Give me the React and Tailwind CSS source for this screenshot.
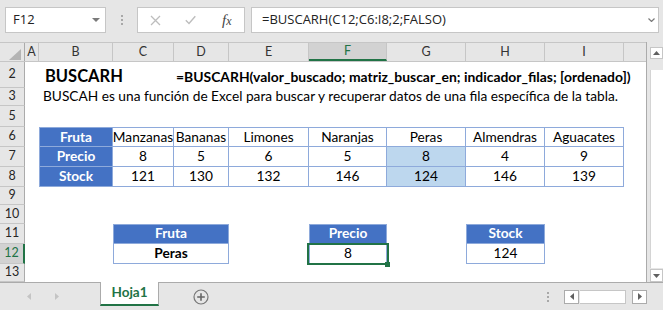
import React from 'react'

const fruits = ['Manzanas', 'Bananas', 'Limones', 'Naranjas', 'Peras', 'Almendras', 'Aguacates']
const precios = ['8', '5', '6', '5', '8', '4', '9']
const stock = ['121', '130', '132', '146', '124', '146', '139']
const widths = ['w-[61px]', 'w-[55px]', 'w-[80px]', 'w-[78px]', 'w-[79px]', 'w-[79px]', 'w-[79px]']

const headers = [
  { label: 'A', w: 'w-[14px]' },
  { label: 'B', w: 'w-[74px]' },
  { label: 'C', w: 'w-[61px]' },
  { label: 'D', w: 'w-[55px]' },
  { label: 'E', w: 'w-[80px]' },
  { label: 'F', w: 'w-[78px]', active: true },
  { label: 'G', w: 'w-[79px]' },
  { label: 'H', w: 'w-[79px]' },
  { label: 'I', w: 'w-[79px]' },
  { label: '', w: 'w-[22px]', last: true },
]

function RowHead({ n, active }) {
  return (
    <div
      className={
        active
          ? 'w-[25px] shrink-0 flex items-center justify-center bg-[#d2d2d2] text-[#217346] border-b border-b-[#c6c6c6] border-r-2 border-r-[#217346] text-[12.5px] leading-none'
          : 'w-[25px] shrink-0 flex items-center justify-center bg-[#e6e6e6] text-[#262626] border-b border-b-[#c6c6c6] border-r border-r-[#ababab] text-[12.5px] leading-none'
      }
    >
      {n}
    </div>
  )
}

function TableRow({ n, label, values, top, hi }) {
  return (
    <div className="flex h-[20px]">
      <RowHead n={n} />
      <div className="w-[14px] shrink-0" />
      <div
        className={`w-[74px] shrink-0 bg-[#4472c4] text-white font-bold flex items-center justify-center border-l border-r border-b border-[#8eaadb] ${top ? 'border-t' : ''}`}
      >
        {label}
      </div>
      {values.map((v, i) => (
        <div
          key={i}
          className={`${widths[i]} shrink-0 flex items-center justify-center border-r border-b border-[#8eaadb] ${top ? 'border-t' : ''} ${hi && i === 4 ? 'bg-[#bdd7ee]' : 'bg-white'}`}
        >
          {v}
        </div>
      ))}
    </div>
  )
}

function EmptyRow({ n }) {
  return (
    <div className="flex h-[20px]">
      <RowHead n={n} />
    </div>
  )
}

function ScrollBtn({ dir }) {
  const paths = {
    up: 'M0 4L3.5 0L7 4Z',
    down: 'M0 0L7 0L3.5 4Z',
    left: 'M4 0L4 7L0 3.5Z',
    right: 'M0 0L4 3.5L0 7Z',
  }
  const vertical = dir === 'up' || dir === 'down'
  return (
    <svg width={vertical ? 7 : 4} height={vertical ? 4 : 7} viewBox={vertical ? '0 0 7 4' : '0 0 4 7'}>
      <path d={paths[dir]} fill="#606060" />
    </svg>
  )
}

export default function App() {
  return (
    <div className="w-[663px] h-[310px] overflow-hidden bg-[#e6e6e6] flex flex-col font-['Lato',sans-serif] text-[13.7px] text-black">
      {/* formula bar */}
      <div className="h-[42px] shrink-0 flex items-start pt-[7px] font-['Open_Sans',sans-serif] text-[13px] text-[#222]">
        <div className="ml-[5px] w-[101px] h-[26px] bg-white border border-[#c6c6c6] flex items-center pl-[7px] pr-[5px]">
          <span className="flex-1">F12</span>
          <svg width="8" height="4" viewBox="0 0 8 4">
            <path d="M0 0H8L4 4Z" fill="#7a7a7a" />
          </svg>
        </div>
        <div className="w-[31px] h-[26px] flex flex-col items-center justify-center gap-[2px]">
          <div className="w-[2px] h-[2px] bg-[#a8a8a8]" />
          <div className="w-[2px] h-[2px] bg-[#a8a8a8]" />
          <div className="w-[2px] h-[2px] bg-[#a8a8a8]" />
        </div>
        <div className="w-[108px] h-[26px] bg-white border border-[#c6c6c6] flex items-center">
          <svg className="ml-[12px]" width="11" height="11" viewBox="0 0 11 11">
            <path d="M1 1L10 10M10 1L1 10" stroke="#bdbdbd" strokeWidth="1.3" />
          </svg>
          <svg className="ml-[24px]" width="11" height="10" viewBox="0 0 11 10">
            <path d="M0.8 5.2L4 8.4L10.3 1.2" stroke="#bdbdbd" strokeWidth="1.4" fill="none" />
          </svg>
          <span className="ml-[26px] font-['Liberation_Serif',serif] italic text-[15px] text-[#444] leading-none">
            f<span className="text-[12px]">x</span>
          </span>
        </div>
        <div className="w-[6px]" />
        <div className="w-[408px] h-[26px] bg-white border border-[#c6c6c6] flex items-center pl-[10px] pr-[3px]">
          <span className="flex-1 whitespace-nowrap">=BUSCARH(C12;C6:I8;2;FALSO)</span>
          <svg width="7" height="4" viewBox="0 0 7 4">
            <path d="M0.5 0.5L3.5 3.5L6.5 0.5" stroke="#7a7a7a" strokeWidth="1.2" fill="none" />
          </svg>
        </div>
      </div>

      {/* sheet + vertical scrollbar */}
      <div className="h-[240px] shrink-0 flex overflow-hidden">
        <div className="w-[647px] shrink-0 border-r border-[#ababab] bg-white flex flex-col overflow-hidden">
          {/* column headers */}
          <div className="flex h-[20px] shrink-0 bg-[#e6e6e6] border-t border-b border-[#c6c6c6] text-[12.5px] text-[#333]">
            <div className="w-[25px] shrink-0 border-r border-[#ababab] flex items-end justify-end pr-[3px] pb-[1px]">
              <svg width="12" height="11" viewBox="0 0 12 11">
                <path d="M12 0V11H0Z" fill="#b4b4b4" />
              </svg>
            </div>
            {headers.map((h) => (
              <div
                key={h.label || 'J'}
                className={`${h.w} shrink-0 flex items-center justify-center ${h.last ? '' : 'border-r border-[#c6c6c6]'} ${h.active ? 'bg-[#d2d2d2] text-[#217346] border-b-2 border-b-[#217346]' : ''}`}
              >
                {h.label}
              </div>
            ))}
          </div>

          {/* row 2 */}
          <div className="flex h-[26px] shrink-0">
            <RowHead n="2" />
            <div className="w-[14px] shrink-0" />
            <div className="w-[135px] shrink-0 flex items-end pb-[4px] pl-[6px] font-bold text-[16.5px] leading-none">BUSCARH</div>
            <div className="flex-1 flex items-end pb-[4px] pl-[2px] font-bold text-[13.9px] leading-none whitespace-nowrap">
              =BUSCARH(valor_buscado; matriz_buscar_en; indicador_filas; [ordenado])
            </div>
          </div>

          {/* row 3 */}
          <div className="flex h-[18px] shrink-0">
            <RowHead n="3" />
            <div className="w-[14px] shrink-0" />
            <div className="flex-1 flex items-end pb-[3px] pl-[4px] leading-none whitespace-nowrap">
              BUSCAH es una función de Excel para buscar y recuperar datos de una fila específica de la tabla.
            </div>
          </div>

          {/* row 5 */}
          <div className="flex h-[21px] shrink-0">
            <RowHead n="5" />
          </div>

          <TableRow n="6" label="Fruta" values={fruits} top />
          <TableRow n="7" label="Precio" values={precios} hi />
          <TableRow n="8" label="Stock" values={stock} hi />
          <EmptyRow n="9" />
          <EmptyRow n="10" />

          {/* row 11 */}
          <div className="flex h-[20px] shrink-0">
            <RowHead n="11" />
            <div className="w-[88px] shrink-0" />
            <div className="w-[116px] shrink-0 bg-[#4472c4] text-white font-bold border border-[#8eaadb] flex items-center justify-center">Fruta</div>
            <div className="w-[80px] shrink-0" />
            <div className="w-[78px] shrink-0 bg-[#4472c4] text-white font-bold border border-[#8eaadb] flex items-center justify-center">Precio</div>
            <div className="w-[79px] shrink-0" />
            <div className="w-[79px] shrink-0 bg-[#4472c4] text-white font-bold border border-[#8eaadb] flex items-center justify-center">Stock</div>
          </div>

          {/* row 12 */}
          <div className="flex h-[20px] shrink-0">
            <RowHead n="12" active />
            <div className="w-[88px] shrink-0" />
            <div className="w-[116px] shrink-0 bg-white font-bold border-x border-b border-[#8eaadb] flex items-center justify-center">Peras</div>
            <div className="w-[80px] shrink-0" />
            <div className="relative w-[78px] shrink-0 bg-white border-x border-b border-[#8eaadb] flex items-center justify-center">
              8
              <div className="absolute -left-[3px] -right-[3px] -top-[1px] -bottom-[2px] border-2 border-[#217346]" />
              <div className="absolute -right-[4px] -bottom-[4px] w-[5px] h-[5px] bg-[#217346]" />
            </div>
            <div className="w-[79px] shrink-0" />
            <div className="w-[79px] shrink-0 bg-white border-x border-b border-[#8eaadb] flex items-center justify-center">124</div>
          </div>

          <EmptyRow n="13" />
        </div>

        <div className="w-[3px] shrink-0" />
        <div className="w-[13px] shrink-0 flex flex-col">
          <div className="h-[5px] shrink-0" />
          <div className="h-[12px] shrink-0 bg-white border border-[#c6c6c6] flex items-center justify-center">
            <ScrollBtn dir="up" />
          </div>
          <div className="h-[11px] shrink-0" />
          <div className="flex-1 bg-white border-l border-[#d4d4d4] mb-[1px]" />
          <div className="h-[13px] shrink-0 bg-white border border-[#c6c6c6] flex items-center justify-center">
            <ScrollBtn dir="down" />
          </div>
        </div>
      </div>

      {/* sheet tabs */}
      <div className="h-[28px] shrink-0 flex">
        <div className="w-[100px] shrink-0 border-t border-[#ababab] flex items-center">
          <svg className="ml-[27px]" width="4" height="7" viewBox="0 0 4 7">
            <path d="M4 0V7L0 3.5Z" fill="#c4c4c4" />
          </svg>
          <svg className="ml-[24px]" width="4" height="7" viewBox="0 0 4 7">
            <path d="M0 0L4 3.5L0 7Z" fill="#c4c4c4" />
          </svg>
        </div>
        <div className="w-[59px] h-[24px] shrink-0 bg-white border-x border-[#ababab] border-b-2 border-b-[#217346] flex items-center justify-center text-[#217346] font-bold text-[13.5px] leading-none">
          Hoja1
        </div>
        <div className="flex-1 border-t border-[#ababab] flex items-center">
          <svg className="ml-[34px]" width="16" height="16" viewBox="0 0 16 16">
            <circle cx="8" cy="8" r="7" stroke="#777" strokeWidth="1.2" fill="none" />
            <path d="M8 4.2V11.8M4.2 8H11.8" stroke="#666" strokeWidth="1.6" />
          </svg>
          <div className="ml-[338px] w-[2px] flex flex-col gap-[2px]">
            <div className="w-[2px] h-[2px] bg-[#a8a8a8]" />
            <div className="w-[2px] h-[2px] bg-[#a8a8a8]" />
            <div className="w-[2px] h-[2px] bg-[#a8a8a8]" />
          </div>
          <div className="ml-[15px] w-[15px] h-[14px] bg-white border border-[#ababab] flex items-center justify-center">
            <ScrollBtn dir="left" />
          </div>
          <div className="ml-[1px] w-[46px] h-[14px] bg-white border-y border-r border-[#c6c6c6]" />
          <div className="ml-[6px] w-[15px] h-[14px] bg-white border border-[#ababab] flex items-center justify-center">
            <ScrollBtn dir="right" />
          </div>
        </div>
      </div>
    </div>
  )
}
